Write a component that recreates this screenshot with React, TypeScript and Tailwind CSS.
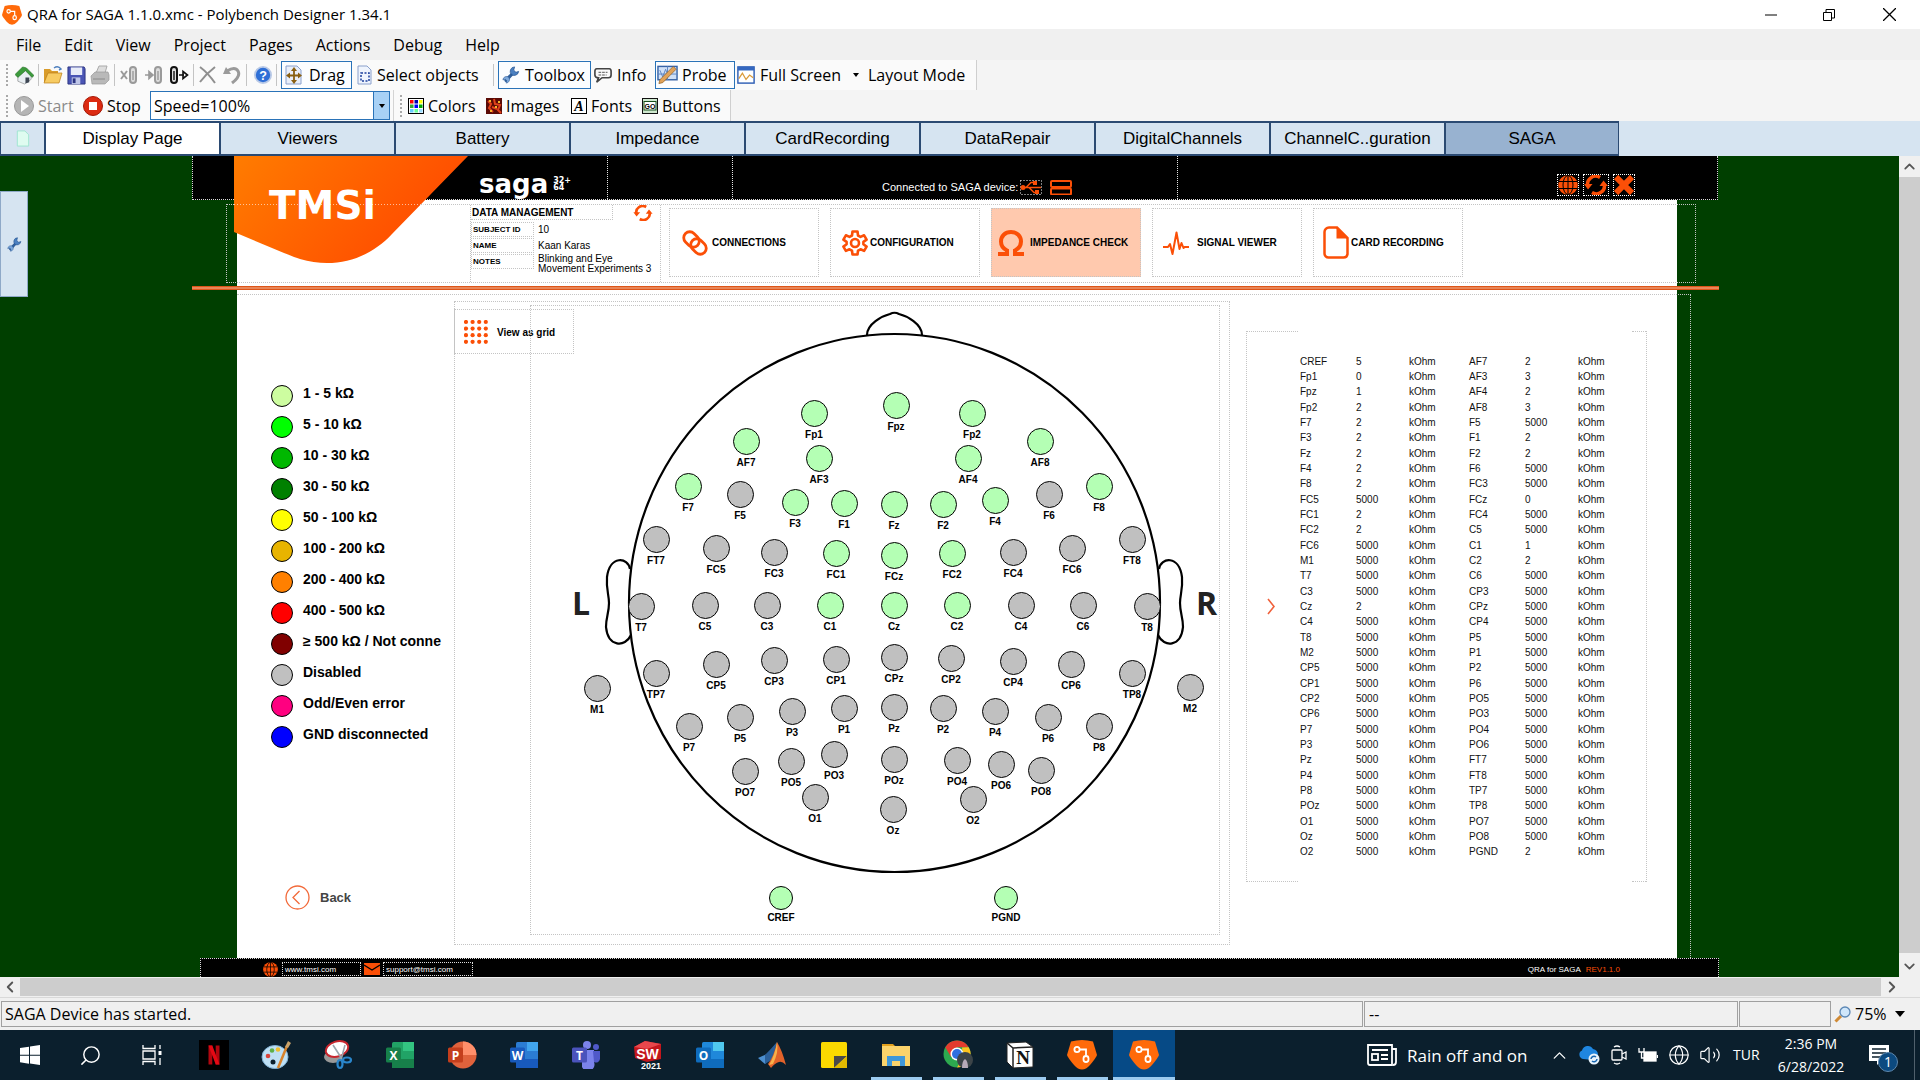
import React from "react";
import { ChevronDown, ChevronLeft, ChevronRight, ChevronUp, Globe, Search, Volume2 } from "lucide-react";

type IconProps = { className?: string };

const ORANGE = "#fb4f07";

/* ---------- shared icons ---------- */

function PolybenchIcon({ className }: IconProps) {
  return (
    <svg viewBox="0 0 30 30" className={className} aria-hidden="true">
      <path d="M4 1.5 Q15 -1.5 26 1.5 L30 15 Q29 18 23 25 Q15 34 7 25 Q1 18 0 15Z" fill="#ff6a0a" />
      <g fill="none" stroke="#fff" strokeWidth="1.8">
        <circle cx="10" cy="9.5" r="2.6" />
        <path d="M13 9.5h6v6" />
        <rect x="16.5" y="16" width="5" height="6" rx="2.5" />
      </g>
    </svg>
  );
}

function WrenchIcon({ className }: IconProps) {
  return (
    <svg viewBox="0 0 20 20" className={className} aria-hidden="true">
      <path d="M4.500 16 12.500 7.500" stroke="#2f5f9c" strokeWidth="3.6" strokeLinecap="round" />
      <path d="M18.500 6a5 5 0 0 1-8 3.500A5 5 0 0 1 14 1l-1 3.600L15.500 7z" fill="#4a7fc0" stroke="#23528f" strokeWidth=".8" />
      <path d="M1 15.500a4 4 0 0 1 6.500-3 4 4 0 0 1-3 6.500l.8-2.800L3.500 14.800z" fill="#7ea9dc" stroke="#23528f" strokeWidth=".6" />
    </svg>
  );
}

function RefreshIcon({ className }: IconProps) {
  return (
    <svg viewBox="0 0 24 20" className={className} aria-hidden="true">
      <g fill="none" stroke={ORANGE} strokeWidth="3.4">
        <path d="M4 11a8 7.5 0 0 1 12-8.500" />
        <path d="M20 9a8 7.5 0 0 1-12 8.500" />
      </g>
      <path d="M0 9h8.500L4 14.500zM15.500 11H24l-4.500-5.500z" fill={ORANGE} />
    </svg>
  );
}

function GlobeGrid({ className }: IconProps) {
  return (
    <svg viewBox="0 0 20 20" className={className} aria-hidden="true">
      <circle cx="10" cy="10" r="9.8" fill={ORANGE} />
      <g fill="none" stroke="#000" strokeWidth="1">
        <path d="M10 0v20M1 6.5h18M1 13.5h18" />
        <ellipse cx="10" cy="10" rx="5" ry="9.5" />
      </g>
    </svg>
  );
}

/* ---------- toolbar icons ---------- */

const HomeIcon = () => (
  <svg viewBox="0 0 20 20" className="size-[19px]" aria-hidden="true">
    <path d="M3 9v7l7 3 7-5V8l-7-6z" fill="#e8eef2" stroke="#777" strokeWidth=".6" />
    <path d="M0 9 8 1l4 1 8 8-2 2-7-7-8 7z" fill="#3c9a3c" stroke="#1f6b22" strokeWidth=".6" />
    <path d="M11 12h4v5l-4 1.5z" fill="#3d4653" />
  </svg>
);
const OpenIcon = () => (
  <svg viewBox="0 0 20 20" className="size-5" aria-hidden="true">
    <path d="M1 4h6l2 2h6v3H5l-3 8H1z" fill="#d99c2b" />
    <path d="M5 8h14l-3 10H1z" fill="#f7cb62" stroke="#b97c17" strokeWidth=".7" />
    <path d="M11 3q4-3 7 1l-2 1" fill="none" stroke="#4d7fbd" strokeWidth="1.4" />
  </svg>
);
const SaveIcon = () => (
  <svg viewBox="0 0 20 20" className="size-[19px]" aria-hidden="true">
    <path d="M1 1h17l1 2v16H1z" fill="#4a55b5" stroke="#2c3582" />
    <path d="M4 1.500h12v8H4z" fill="#e8ecf8" />
    <path d="M5 12h9v7H5z" fill="#bfc6e8" />
    <path d="M6 13h3v5H6z" fill="#2c3582" />
  </svg>
);
const PrintIcon = () => (
  <svg viewBox="0 0 20 20" className="size-5" aria-hidden="true">
    <path d="M6 8 9 1h8l-2 7z" fill="#ddd" stroke="#aaa" />
    <path d="M1 11 5 7h13l1 3v5l-4 4H2z" fill="#b9b9b9" stroke="#999" strokeWidth=".7" />
    <path d="M3 14h12" stroke="#8a8a8a" />
  </svg>
);
function ClipIcon({ kind }: { kind: "remove" | "in" | "out" }) {
  const color = kind === "out" ? "#111" : "#9a9a9a";
  const clipX = kind === "out" ? 2 : 11;
  return (
    <svg viewBox="0 0 20 20" className="size-5" aria-hidden="true">
      <rect x={clipX} y="2" width="6" height="16" rx="3" fill="#ddd" stroke={color} strokeWidth="2" />
      <path d={`M${clipX + 3} 6v9`} stroke={color} strokeWidth="1.4" />
      {kind === "remove" && <path d="M2 6l6 8M8 6l-6 8" stroke={color} strokeWidth="2" />}
      {kind === "in" && <path d="M1 10h6M5 6.500 9 10 5 13.500z" fill={color} stroke={color} strokeWidth="1.600" />}
      {kind === "out" && <path d="M10 10h5M14 6.500 18.500 10 14 13.500z" fill="#fff" stroke={color} strokeWidth="1.600" />}
    </svg>
  );
}
const DeleteIcon = () => (
  <svg viewBox="0 0 20 20" className="size-5" aria-hidden="true">
    <path d="M2 2q8 6 15 16M17 2Q8 9 2 17" fill="none" stroke="#8f8f8f" strokeWidth="2" />
  </svg>
);
const UndoIcon = () => (
  <svg viewBox="0 0 20 20" className="size-5" aria-hidden="true">
    <path d="M5 6q8-5 11 0t-6 12" fill="none" stroke="#9a9a9a" strokeWidth="3" />
    <path d="M1 9 4 2l5 7z" fill="#9a9a9a" />
  </svg>
);
const HelpIcon = () => (
  <svg viewBox="0 0 20 20" className="size-[18px]" aria-hidden="true">
    <circle cx="10" cy="10" r="9" fill="#2f6fd6" stroke="#b9c9e6" strokeWidth="2" />
    <text x="10" y="15" textAnchor="middle" fontSize="14" fontWeight="bold" fill="#fff" fontFamily="Liberation Sans">?</text>
  </svg>
);
const DragIcon = () => (
  <svg viewBox="0 0 18 20" className="h-5 w-[18px]" aria-hidden="true">
    <path d="M1 1h11l4 4v14H1z" fill="#e9effa" stroke="#8aa0cc" />
    <path d="M9 4v13M3 10.500h12" stroke="#8a6012" strokeWidth="1.800" />
    <path d="M9 2l3 4H6zM9 19l3-4H6zM1 10.500l4-3v6zM17 10.500l-4-3v6z" fill="#8a6012" />
  </svg>
);
const SelectIcon = () => (
  <svg viewBox="0 0 16 20" className="h-5 w-4" aria-hidden="true">
    <path d="M1 1h9l4 4v14H1z" fill="#eff4fd" stroke="#8aa0cc" />
    <rect x="4" y="8" width="8" height="8" fill="none" stroke="#1d3f9c" strokeWidth="1.500" strokeDasharray="2 1.500" />
  </svg>
);
const InfoIcon = () => (
  <svg viewBox="0 0 20 20" className="size-[18px]" aria-hidden="true">
    <path d="M3 3h14q2 0 2 3v4q0 3-3 3H9l-6 5 2-5q-4 0-4-3V6q0-3 2-3z" fill="#fafafa" stroke="#444" strokeWidth="1.800" />
    <path d="M5 7h10M5 10h9" stroke="#444" strokeDasharray="3 1" />
  </svg>
);
const ProbeIcon = () => (
  <svg viewBox="0 0 22 20" className="h-5 w-[21px]" aria-hidden="true">
    <rect x="1" y="1" width="20" height="14" fill="#cfe0f7" stroke="#3763a6" strokeWidth="1.500" />
    <path d="M3 5l3 7 3-8 3 8M1 9h20M11 1v14" fill="none" stroke="#5c84c2" />
    <path d="M20 4 6 18l-4 1 1-4L17 1z" fill="#e0a35a" stroke="#8d5a1e" strokeWidth=".7" />
  </svg>
);
const FullScreenIcon = () => (
  <svg viewBox="0 0 20 20" className="size-[18px]" aria-hidden="true">
    <rect x="1" y="1" width="18" height="18" fill="#fff" stroke="#2f5fb5" strokeWidth="1.600" />
    <path d="M1 1h18v4H1z" fill="#3568c0" />
    <path d="M2 14 6 8l4 7 4-5 4 3" fill="none" stroke="#d99a3a" strokeWidth="1.400" />
  </svg>
);
const StartIcon = () => (
  <svg viewBox="0 0 20 20" className="size-5" aria-hidden="true">
    <circle cx="10" cy="10" r="9.500" fill="#b5b5b5" stroke="#999" />
    <path d="M7 4l8 6-8 6z" fill="#fff" />
  </svg>
);
const StopIcon = () => (
  <svg viewBox="0 0 20 20" className="size-5" aria-hidden="true">
    <circle cx="10" cy="10" r="9.500" fill="#dc2b12" stroke="#a51906" />
    <rect x="6" y="6" width="8" height="8" fill="#fff" />
  </svg>
);
const swatches = ["#f00", "#00a", "#ff0", "#3a3", "#00f", "#0a0", "#6cf", "#6f9", "#9df"];
const ColorsIcon = () => (
  <svg viewBox="0 0 16 16" className="size-4" aria-hidden="true">
    <rect x=".5" y=".5" width="15" height="15" fill="#fff" stroke="#000" />
    {swatches.map((c, i) => (
      <rect key={i} x={2 + (i % 3) * 4.5} y={2 + Math.floor(i / 3) * 4.5} width="3.500" height="3.500" fill={c} />
    ))}
  </svg>
);
const ImagesIcon = () => (
  <svg viewBox="0 0 16 16" className="size-4" aria-hidden="true">
    <rect width="16" height="16" fill="#5a0b06" />
    <path d="M2 3l3 3-2 4 4 4M8 1l1 5 5 1-2 5 3 3M6 9l5 2" fill="none" stroke="#e2401a" strokeWidth="2" />
    <path d="M3 2h2v2H3zM12 3h2v2h-2zM9 8h2v2H9zM4 12h2v2H4z" fill="#f4b52a" />
  </svg>
);
const FontsIcon = () => (
  <svg viewBox="0 0 16 16" className="size-4" aria-hidden="true">
    <rect x=".5" y=".5" width="15" height="15" fill="#fff" stroke="#000" />
    <text x="8" y="13" textAnchor="middle" fontSize="14" fontWeight="bold" fontStyle="italic" fontFamily="Liberation Serif">A</text>
  </svg>
);
const ButtonsIcon = () => (
  <svg viewBox="0 0 16 16" className="size-4" aria-hidden="true">
    <rect x=".5" y=".5" width="15" height="15" fill="#cfe8cf" stroke="#111" />
    <rect x="2" y="3.500" width="12" height="8.500" fill="#fff" stroke="#174f1b" />
    <text x="8" y="11" textAnchor="middle" fontSize="7" fontWeight="bold" fontFamily="Liberation Sans">GO</text>
  </svg>
);

/* ---------- window chrome ---------- */

function TitleBar() {
  return (
    <header className="flex h-[29px] items-center bg-white pl-[2px]">
      <PolybenchIcon className="h-5 w-5" />
      <h1 className="ml-[5px] text-[15px]">QRA for SAGA 1.1.0.xmc - Polybench Designer 1.34.1</h1>
      <div className="ml-auto flex h-full">
        <button aria-label="Minimize" className="flex w-[58px] items-center justify-center">
          <svg viewBox="0 0 12 12" className="size-3"><path d="M0 6h12" stroke="#000" /></svg>
        </button>
        <button aria-label="Restore" className="flex w-[58px] items-center justify-center">
          <svg viewBox="0 0 12 12" className="size-3" fill="none" stroke="#000"><path d="M.5 3.500h8v8h-8zM3 3V.5h8.500V9H9" /></svg>
        </button>
        <button aria-label="Close" className="flex w-[62px] items-center justify-center">
          <svg viewBox="0 0 12 12" className="size-[13px]"><path d="M0 0l12 12M12 0 0 12" stroke="#000" strokeWidth="1.200" /></svg>
        </button>
      </div>
    </header>
  );
}

const menus = ["File", "Edit", "View", "Project", "Pages", "Actions", "Debug", "Help"];

function MenuBar() {
  return (
    <nav className="flex h-[31px] items-center gap-[23px] bg-[#f0f0f0] pl-4 text-base">
      {menus.map((m) => (
        <button key={m}>{m}</button>
      ))}
    </nav>
  );
}

const Separator = () => <span className="mx-1 h-[22px] w-px bg-[#c4c4c4]" />;
const Grip = () => <span className="mx-[6px] h-[22px] border-l-2 border-dotted border-[#a9a9a9]" />;

function ToolButton({ icon, label, active, disabled, className = "" }: { icon?: React.ReactNode; label: string; active?: boolean; disabled?: boolean; className?: string }) {
  return (
    <button
      disabled={disabled}
      className={`flex h-7 items-center whitespace-nowrap ${active ? "border border-[#2a73b8] bg-[#fbfdff]" : ""} ${disabled ? "text-[#8a8a8a]" : ""} ${className}`}
    >
      {icon}
      {label}
    </button>
  );
}

function Toolbars() {
  return (
    <div className="bg-[#f4f4f4] text-base">
      <div className="flex h-[30px] w-[977px] items-center border-r border-[#cfcfcf] bg-[#fafafa]">
        <Grip />
        <button aria-label="Home" className="ml-px"><HomeIcon /></button>
        <Separator />
        <div className="flex items-center gap-1">
          <button aria-label="Open"><OpenIcon /></button>
          <button aria-label="Save"><SaveIcon /></button>
          <button aria-label="Print"><PrintIcon /></button>
        </div>
        <Separator />
        <div className="flex items-center gap-[5px]">
          <button aria-label="Disconnect"><ClipIcon kind="remove" /></button>
          <button aria-label="Import"><ClipIcon kind="in" /></button>
          <button aria-label="Export"><ClipIcon kind="out" /></button>
        </div>
        <Separator />
        <div className="flex items-center gap-1">
          <button aria-label="Delete"><DeleteIcon /></button>
          <button aria-label="Undo"><UndoIcon /></button>
        </div>
        <Separator />
        <button aria-label="Help" className="ml-[3px]"><HelpIcon /></button>
        <Separator />
        <ToolButton active icon={<DragIcon />} label="Drag" className="w-[71px] gap-[6px] pl-[3px]" />
        <ToolButton icon={<SelectIcon />} label="Select objects" className="ml-[5px] w-[132px] gap-1" />
        <Separator />
        <ToolButton active icon={<WrenchIcon className="size-[18px]" />} label="Toolbox" className="w-[93px] gap-[5px] pl-[3px]" />
        <ToolButton icon={<InfoIcon />} label="Info" className="ml-[3px] w-[61px] gap-[5px]" />
        <ToolButton active icon={<ProbeIcon />} label="Probe" className="w-[80px] gap-1 pl-px" />
        <ToolButton icon={<FullScreenIcon />} label="Full Screen" className="ml-[2px] w-[116px] gap-[5px]" />
        <svg viewBox="0 0 6 4" className="h-1 w-[6px]"><path d="M0 0h6L3 4z" /></svg>
        <ToolButton label="Layout Mode" className="ml-[9px]" />
      </div>
      <div className="flex h-[31px] items-center">
        <div className="flex h-full w-[731px] items-center border-r border-[#cfcfcf] bg-[#fafafa]">
          <Grip />
          <ToolButton disabled icon={<StartIcon />} label="Start" className="w-[69px] gap-1" />
          <ToolButton icon={<StopIcon />} label="Stop" className="w-[67px] gap-1" />
          <div className="relative">
            <select aria-label="Speed" className="h-[29px] w-[240px] appearance-none border border-[#2a73b8] bg-white pl-[3px]">
              <option>Speed=100%</option>
            </select>
            <span className="pointer-events-none absolute inset-y-px right-px flex w-4 items-center justify-center border-l border-[#2a73b8] bg-[#a8d1f5]">
              <svg viewBox="0 0 6 4" className="h-1 w-[6px]"><path d="M0 0h6L3 4z" /></svg>
            </span>
          </div>
          <span className="ml-[3px] h-full w-px bg-[#d4d4d4]" />
          <Grip />
          <ToolButton icon={<ColorsIcon />} label="Colors" className="w-[78px] gap-1" />
          <ToolButton icon={<ImagesIcon />} label="Images" className="w-[85px] gap-1" />
          <ToolButton icon={<FontsIcon />} label="Fonts" className="w-[71px] gap-1" />
          <ToolButton icon={<ButtonsIcon />} label="Buttons" className="gap-1" />
        </div>
      </div>
    </div>
  );
}

const tabs = ["Display Page", "Viewers", "Battery", "Impedance", "CardRecording", "DataRepair", "DigitalChannels", "ChannelC..guration", "SAGA"];

function PageTabs() {
  return (
    <div role="tablist" className="flex h-[35px] bg-[#d6e4f1] font-['Liberation_Sans',sans-serif] text-[17px]">
      <button aria-label="New page" className="flex w-11 items-center justify-center border-y-2 border-l border-[#2b4a72]">
        <svg viewBox="0 0 14 18" className="h-[17px] w-[14px]"><path d="M1 1h8l4 4v12H1z" fill="#dffcf0" stroke="#9fe6d0" /></svg>
      </button>
      {tabs.map((t) => (
        <button
          key={t}
          role="tab"
          aria-selected={t === "Display Page"}
          className={`w-[175px] border-y-2 border-l-2 border-[#2b4a72] last:border-r ${t === "Display Page" ? "bg-white" : t === "SAGA" ? "bg-[#98b2d0]" : "bg-[#d6e4f1]"}`}
        >
          {t}
        </button>
      ))}
    </div>
  );
}

/* ---------- SAGA page ---------- */

function HeaderStrip() {
  return (
    <div className="relative z-10 mr-[181px] ml-[192px] flex h-11 border-x border-b border-dotted border-[#d8d8d8] bg-black text-white">
      <div className="w-[415px] border-r border-dotted border-[#e5e5e5]">
        <svg viewBox="0 0 236 112" className="absolute top-0 left-[41px] h-28 w-[236px]" aria-label="TMSi">
          <defs>
            <linearGradient id="flame" x1="0" x2="1" y1="0" y2=".4">
              <stop offset="0" stopColor="#ff7c00" />
              <stop offset="1" stopColor="#ff4a00" />
            </linearGradient>
          </defs>
          <path d="M0 0H234L158 78C136 102 102 114 66 103Q60 101 50 97L0 76Z" fill="url(#flame)" />
          <path d="M0 48.500H195" stroke="#fff" strokeOpacity=".6" strokeDasharray="1 2" />
          <text x="35" y="63" fontSize="39" fontWeight="bold" fill="#fff" fontFamily="DejaVu Sans">TMSi</text>
        </svg>
        <div className="ml-[286px] flex h-full items-center gap-[5px] pt-3 font-['DejaVu_Sans',sans-serif]">
          <span className="text-[26px] leading-6 font-bold">saga</span>
          <span className="flex text-[8px] leading-[7px] font-bold">
            <span>32<br />64</span>
            <span>+</span>
          </span>
        </div>
      </div>
      <div className="w-[125px] border-r border-dotted border-[#e5e5e5]" />
      <div className="flex w-[445px] items-center border-r border-dotted border-[#e5e5e5] pt-5 pl-[149px] font-['Liberation_Sans',sans-serif] text-[11px]">
        <span className="mr-[2px] whitespace-nowrap">Connected to SAGA device:</span>
        <svg viewBox="0 0 22 15" className="h-[15px] w-[22px]" aria-hidden="true">
          <rect x=".5" y=".5" width="21" height="14" fill="none" stroke="#fff" strokeDasharray="1 2" />
          <g fill="none" stroke={ORANGE} strokeWidth="1.500"><path d="M3 7.500h18M6 7.500l5-5h3M9 7.500l5 5h3" /></g>
          <circle cx="3" cy="7.500" r="2.500" fill={ORANGE} /><path d="M13 1h4v4h-4zM15 10h4v4h-4z" fill={ORANGE} />
        </svg>
        <svg viewBox="0 0 22 15" className="ml-2 h-[15px] w-[22px]" aria-hidden="true">
          <g fill="none" stroke={ORANGE} strokeWidth="2"><rect x="1" y="1" width="20" height="6" rx="1" /><rect x="1" y="8.500" width="20" height="6" rx="1" /></g>
        </svg>
      </div>
      <div className="mt-[18px] mr-[82px] ml-auto flex gap-1">
        <button aria-label="Network" className="size-[22px] border border-dotted border-white"><GlobeGrid className="size-5" /></button>
        <button aria-label="Reload" className="h-[22px] w-[26px] border border-dotted border-white"><RefreshIcon className="h-5 w-6" /></button>
        <button aria-label="Close SAGA" className="size-[22px] border border-dotted border-white">
          <svg viewBox="0 0 20 20" className="size-5"><path d="M2 2l16 16M18 2 2 18" stroke={ORANGE} strokeWidth="6" /></svg>
        </button>
      </div>
    </div>
  );
}

const LinkIcon = () => (
  <svg viewBox="0 0 26 26" className="size-[26px]" fill="none" stroke={ORANGE} strokeWidth="2.800" aria-hidden="true">
    <rect x="1" y="3.500" width="17" height="12" rx="6" transform="rotate(45 9.500 9.500)" />
    <rect x="8" y="10.500" width="17" height="12" rx="6" transform="rotate(45 16.500 16.500)" />
  </svg>
);
const GearIcon = () => (
  <svg viewBox="0 0 26 26" className="size-[26px]" fill="none" stroke={ORANGE} strokeWidth="2.600" strokeLinejoin="round" aria-hidden="true">
    <path d="M10.500 1.500h5l.5 4 2.500 1.400 3.600-1.600 2.500 4.300-3.200 2.300v2.400l3.200 2.300-2.500 4.300-3.600-1.600L16 20.700l-.5 3.800h-5l-.5-3.800-2.500-1.400-3.600 1.600-2.500-4.300 3.200-2.300v-2.400L1.400 9.600l2.500-4.300 3.600 1.600L10 5.500z" />
    <circle cx="13" cy="13" r="4" />
  </svg>
);
const OmegaIcon = () => (
  <svg viewBox="0 0 26 26" className="size-[26px]" fill="none" stroke={ORANGE} strokeWidth="4" aria-hidden="true">
    <path d="M0 24h9v-3.500C4 18 3 14.500 3 11.500 3 6 7 2 13 2s10 4 10 9.500c0 3-1 6.500-6 9V24h9" />
  </svg>
);
const PulseIcon = () => (
  <svg viewBox="0 0 26 24" className="h-6 w-[26px]" fill="none" stroke={ORANGE} strokeWidth="2" strokeLinejoin="round" aria-hidden="true">
    <path d="M0 16h5l2-3 2.500 10L13.500 1.500 16.500 18l2-6 2 5 1-1H26" />
  </svg>
);
const CardIcon = () => (
  <svg viewBox="0 0 26 33" className="h-[33px] w-[26px]" aria-hidden="true">
    <path d="M6 1.500h8L24.500 12v16a4 4 0 0 1-4 3.500H5.500a4 4 0 0 1-4-4V6A4.500 4.500 0 0 1 6 1.500z" fill="#fff" stroke={ORANGE} strokeWidth="2.500" />
    <path d="M13.500 1.500 25 12.500H13.500z" fill={ORANGE} />
  </svg>
);

const navItems = [
  { label: "CONNECTIONS", icon: <LinkIcon />, cls: "gap-1 pl-3" },
  { label: "CONFIGURATION", icon: <GearIcon />, cls: "gap-[2px] pl-[11px]" },
  { label: "IMPEDANCE CHECK", icon: <OmegaIcon />, cls: "gap-[6px] pl-[6px]" },
  { label: "SIGNAL VIEWER", icon: <PulseIcon />, cls: "gap-2 pl-[10px]" },
  { label: "CARD RECORDING", icon: <CardIcon />, cls: "gap-[2px] pl-[9px]" },
];

function NavRow() {
  return (
    <div className="mt-1 -mr-[19px] -ml-[11px] flex h-[79px] border border-dotted border-[#c4c4c4]">
      <div className="ml-[243px] w-[191px] border-x border-dotted border-[#c4c4c4] font-['Liberation_Sans',sans-serif]">
        <div className="flex justify-between">
          <h2 className="h-[15px] w-[142px] border-r border-b border-dotted border-[#c4c4c4] pl-px text-[10px] leading-[16px] font-bold">DATA MANAGEMENT</h2>
          <button aria-label="Refresh data" className="mr-[7px] h-4 w-5"><RefreshIcon className="h-4 w-5" /></button>
        </div>
        <dl className="mt-px grid grid-cols-[63px_1fr] text-[10px]">
          <dt className="h-[15px] border border-dotted border-[#c4c4c4] pl-px text-[8px] leading-[14px] font-bold">SUBJECT ID</dt>
          <dd className="pl-1 leading-[16px]">10</dd>
          <dt className="h-[15px] border border-dotted border-[#c4c4c4] pl-px text-[8px] leading-[14px] font-bold">NAME</dt>
          <dd className="pl-1 leading-[16px]">Kaan Karas</dd>
          <dt className="h-[15px] border border-dotted border-[#c4c4c4] pl-px text-[8px] leading-[14px] font-bold">NOTES</dt>
          <dd className="pl-1 leading-[10px] whitespace-nowrap">Blinking and Eye<br />Movement Experiments 3</dd>
        </dl>
      </div>
      <nav className="mt-[3px] ml-2 flex h-[69px] gap-[11px]">
        {navItems.map((n) => (
          <button
            key={n.label}
            className={`flex w-[150px] items-center border border-dotted border-[#c4c4c4] font-['Liberation_Sans',sans-serif] text-[10px] font-bold whitespace-nowrap ${n.cls} ${n.label === "IMPEDANCE CHECK" ? "bg-[#ffc9ae]" : ""}`}
          >
            {n.icon}
            {n.label}
          </button>
        ))}
      </nav>
    </div>
  );
}

const legend = [
  ["#cdfda0", "1 - 5 kΩ"],
  ["#00ff00", "5 - 10 kΩ"],
  ["#00b800", "10 - 30 kΩ"],
  ["#008000", "30 - 50 kΩ"],
  ["#ffff00", "50 - 100 kΩ"],
  ["#e8b400", "100 - 200 kΩ"],
  ["#ff8000", "200 - 400 kΩ"],
  ["#ff0000", "400 - 500 kΩ"],
  ["#800000", "≥ 500 kΩ / Not conne"],
  ["#c0c0c0", "Disabled"],
  ["#ff0080", "Odd/Even error"],
  ["#0000ff", "GND disconnected"],
];

function Legend() {
  return (
    <aside className="flex w-[217px] flex-col pt-[85px] pl-[34px] font-['Liberation_Sans',sans-serif] font-bold">
      <ul>
        {legend.map(([color, label]) => (
          <li key={label} className="flex h-[31px] items-center">
            <span className="size-[22px] shrink-0 rounded-full border border-black" style={{ backgroundColor: color }} />
            <span className="ml-[10px] pb-[5px] text-sm whitespace-nowrap">{label}</span>
          </li>
        ))}
      </ul>
      <button className="mt-[133px] ml-[14px] flex items-center gap-[10px] text-[13px] text-[#444]">
        <svg viewBox="0 0 25 25" className="size-[25px]" fill="none" stroke="#f26a3a" strokeWidth="1.300" aria-hidden="true">
          <circle cx="12.500" cy="12.500" r="11.500" />
          <path d="M14.500 6 8 12.500l6.500 6.500" />
        </svg>
        Back
      </button>
    </aside>
  );
}

type Electrode = [name: string, x: number, y: number, ok?: 1];

const electrodes: Electrode[] = [
  ["Fp1", 285, 109, 1], ["Fpz", 367, 101, 1], ["Fp2", 443, 109, 1],
  ["AF7", 217, 137, 1], ["AF3", 290, 154, 1], ["AF4", 439, 154, 1], ["AF8", 511, 137, 1],
  ["F7", 159, 182, 1], ["F5", 211, 190], ["F3", 266, 198, 1], ["F1", 315, 199, 1], ["Fz", 365, 200, 1],
  ["F2", 414, 200, 1], ["F4", 466, 196, 1], ["F6", 520, 190], ["F8", 570, 182, 1],
  ["FT7", 127, 235], ["FC5", 187, 244], ["FC3", 245, 248], ["FC1", 307, 249, 1], ["FCz", 365, 251, 1],
  ["FC2", 423, 249, 1], ["FC4", 484, 248], ["FC6", 543, 244], ["FT8", 603, 235],
  ["T7", 112, 302], ["C5", 176, 301], ["C3", 238, 301], ["C1", 301, 301, 1], ["Cz", 365, 301, 1],
  ["C2", 428, 301, 1], ["C4", 492, 301], ["C6", 554, 301], ["T8", 618, 302],
  ["M1", 68, 384], ["TP7", 127, 369], ["CP5", 187, 360], ["CP3", 245, 356], ["CP1", 307, 355], ["CPz", 365, 353],
  ["CP2", 422, 354], ["CP4", 484, 357], ["CP6", 542, 360], ["TP8", 603, 369], ["M2", 661, 383],
  ["P7", 160, 422], ["P5", 211, 413], ["P3", 263, 407], ["P1", 315, 404], ["Pz", 365, 403],
  ["P2", 414, 404], ["P4", 466, 407], ["P6", 519, 413], ["P8", 570, 422],
  ["PO7", 216, 467], ["PO5", 262, 457], ["PO3", 305, 450], ["POz", 365, 455], ["PO4", 428, 456],
  ["PO6", 472, 460], ["PO8", 512, 466],
  ["O1", 286, 493], ["Oz", 364, 505], ["O2", 444, 495],
  ["CREF", 252, 595, 1], ["PGND", 477, 595, 1],
];

function HeadMap() {
  return (
    <section className="relative mt-[6px] mb-[13px] w-[776px] border border-dotted border-[#c4c4c4]">
      <button className="absolute top-[7px] -left-px flex h-[45px] w-[120px] items-center gap-[9px] border border-dotted border-[#c4c4c4] pt-px pl-[9px] font-['Liberation_Sans',sans-serif] text-[10px] font-bold">
        <svg viewBox="0 0 24 24" className="size-6" fill={ORANGE} aria-hidden="true">
          {[2, 8.6, 15.2, 21.800].map((y) => [2, 8.6, 15.2, 21.800].map((x) => <circle key={`${x}-${y}`} cx={x} cy={y} r="2.100" />))}
        </svg>
        View as grid
      </button>
      <div className="relative mt-[3px] ml-[75px] h-[630px] w-[690px] border border-dotted border-[#c4c4c4] font-['Liberation_Sans',sans-serif]">
        <svg viewBox="0 0 690 630" className="absolute -top-px -left-px h-[630px] w-[690px]" fill="none" stroke="#000" strokeWidth="2.200" aria-hidden="true">
          <ellipse cx="364.500" cy="298" rx="265.500" ry="269" />
          <path d="M337 30C337 19 352 11 360 9Q364.500 6.500 369 9C377 11 392 19 392 30" />
          <path d="M100 264C98 252 80 250 77 272C76 284 79 290 79 298C79 308 76 312 76 322C78 342 95 343 101 330" />
          <path d="M629 264C631 252 649 250 652 272C653 284 650 290 650 298C650 308 653 312 653 322C651 342 634 343 628 330" />
        </svg>
        <span className="absolute top-[277px] left-[41px] font-['Open_Sans',sans-serif] text-[32px] leading-10 font-bold text-[#222]">L</span>
        <span className="absolute top-[277px] left-[665px] font-['Open_Sans',sans-serif] text-[32px] leading-10 font-bold text-[#222]">R</span>
        {electrodes.map(([name, x, y, ok]) => (
          <div key={name} className="absolute flex w-12 flex-col items-center" style={{ left: x - 26, top: y - 15 }}>
            <span
              className={`rounded-full border border-black ${y > 590 ? "size-6" : "size-[27px]"} ${ok ? "bg-[#b4ffb4]" : "bg-[#c0c0c0]"}`}
            />
            <span className="text-[10px] leading-4 font-bold">{name}</span>
          </div>
        ))}
      </div>
    </section>
  );
}

const readings: [string, number, string, number][] = [
  ["CREF", 5, "AF7", 2], ["Fp1", 0, "AF3", 3], ["Fpz", 1, "AF4", 2], ["Fp2", 2, "AF8", 3],
  ["F7", 2, "F5", 5000], ["F3", 2, "F1", 2], ["Fz", 2, "F2", 2], ["F4", 2, "F6", 5000],
  ["F8", 2, "FC3", 5000], ["FC5", 5000, "FCz", 0], ["FC1", 2, "FC4", 5000], ["FC2", 2, "C5", 5000],
  ["FC6", 5000, "C1", 1], ["M1", 5000, "C2", 2], ["T7", 5000, "C6", 5000], ["C3", 5000, "CP3", 5000],
  ["Cz", 2, "CPz", 5000], ["C4", 5000, "CP4", 5000], ["T8", 5000, "P5", 5000], ["M2", 5000, "P1", 5000],
  ["CP5", 5000, "P2", 5000], ["CP1", 5000, "P6", 5000], ["CP2", 5000, "PO5", 5000], ["CP6", 5000, "PO3", 5000],
  ["P7", 5000, "PO4", 5000], ["P3", 5000, "PO6", 5000], ["Pz", 5000, "FT7", 5000], ["P4", 5000, "FT8", 5000],
  ["P8", 5000, "TP7", 5000], ["POz", 5000, "TP8", 5000], ["O1", 5000, "PO7", 5000], ["Oz", 5000, "PO8", 5000],
  ["O2", 5000, "PGND", 2],
];

function ReadingsPanel() {
  return (
    <section className="mt-9 ml-4 flex h-[551px] w-[401px] border-x border-dotted border-[#c4c4c4] font-['Liberation_Sans',sans-serif]">
      <div className="flex h-full w-[51px] items-center justify-center border-y border-dotted border-[#c4c4c4]">
        <button aria-label="Collapse table" className="-ml-1 bg-white py-4">
          <svg viewBox="0 0 8 17" className="h-[17px] w-2" fill="none" stroke="#f0603a" strokeWidth="1.600"><path d="M1 1l6 7.500L1 16" /></svg>
        </button>
      </div>
      <table className="mt-[23px] ml-[2px] h-[506px] table-fixed text-left text-[10px] leading-[12px] text-[#111]">
        <tbody>
          {readings.map(([a, av, b, bv]) => (
            <tr key={a}>
              <th scope="row" className="w-14 p-0 font-normal">{a}</th>
              <td className="w-[53px] p-0">{av}</td>
              <td className="w-[60px] p-0">kOhm</td>
              <th scope="row" className="w-14 p-0 font-normal">{b}</th>
              <td className="w-[53px] p-0">{bv}</td>
              <td className="w-[53px] p-0">kOhm</td>
            </tr>
          ))}
        </tbody>
      </table>
      <div className="ml-auto w-[14px] border-y border-dotted border-[#c4c4c4]" />
    </section>
  );
}

function FooterStrip() {
  return (
    <footer className="mr-[180px] ml-[200px] flex h-[19px] items-center border-x border-t border-dotted border-[#d8d8d8] bg-black pt-[2px] pl-[62px] font-['Liberation_Sans',sans-serif] text-[8px] text-white">
      <GlobeGrid className="size-[15px]" />
      <a href="#site" className="ml-1 h-[14px] w-[79px] border border-dotted border-[#ddd] pl-[2px] leading-[14px]">www.tmsi.com</a>
      <svg viewBox="0 0 16 12" className="ml-[3px] h-3 w-4" aria-hidden="true">
        <rect width="16" height="12" fill={ORANGE} />
        <path d="M0 2l8 5 8-5" fill="none" stroke="#000" strokeWidth="1.300" />
      </svg>
      <a href="#mail" className="ml-[3px] h-[14px] w-[90px] border border-dotted border-[#ddd] pl-[2px] leading-[14px]">support@tmsi.com</a>
      <span className="ml-auto pt-[2px]">QRA for SAGA</span>
      <span className="mr-[98px] ml-[5px] pt-[2px] text-[#fb4f07]">REV1.1.0</span>
    </footer>
  );
}

function Canvas() {
  return (
    <div className="flex flex-1">
      <main className="relative flex flex-1 flex-col bg-[#003f00]">
        <HeaderStrip />
        <div className="mr-[222px] ml-[237px] flex flex-1 flex-col bg-white">
          <NavRow />
          <div className="mt-[3px] -mr-[42px] -ml-[45px] h-1 border-y border-[#dd5518] bg-[#e88658]" />
          <div className="mt-1 -mr-[14px] flex flex-1 border-t border-r border-dotted border-[#c4c4c4]">
            <Legend />
            <HeadMap />
            <ReadingsPanel />
          </div>
        </div>
        <FooterStrip />
        <button aria-label="Open toolbox" className="absolute top-[35px] left-0 flex h-[106px] w-7 items-center justify-center border border-[#8fa9c8] bg-[#d6e4f1]">
          <WrenchIcon className="size-[15px]" />
        </button>
      </main>
      <div className="flex w-[21px] flex-col items-center bg-[#f0f0f0] text-[#555]">
        <ChevronUp className="my-[2px] size-[17px]" strokeWidth={2.500} />
        <div className="w-full flex-1 bg-[#cdcdcd]" />
        <ChevronDown className="mt-[5px] mb-[2px] size-[17px]" strokeWidth={2.500} />
      </div>
    </div>
  );
}

function StatusArea() {
  return (
    <div className="bg-[#f0f0f0]">
      <div className="flex h-5 items-center text-[#555]">
        <ChevronLeft className="mx-px size-[18px]" strokeWidth={2.500} />
        <div className="h-[18px] flex-1 bg-[#cdcdcd]" />
        <ChevronRight className="mr-[19px] ml-[2px] size-[18px]" strokeWidth={2.500} />
      </div>
      <div className="flex h-[33px] items-center gap-px border-t border-[#d9d9d9] pl-px text-base">
        <div className="flex h-[26px] flex-1 items-center border border-[#a0a0a0] pl-[3px]">SAGA Device has started.</div>
        <div className="flex h-[26px] w-[374px] items-center border border-[#a0a0a0] pl-1">--</div>
        <div className="h-[26px] w-[92px] border border-[#a0a0a0]" />
        <button className="flex w-[88px] items-center gap-1 pl-[2px]">
          <svg viewBox="0 0 17 17" className="size-[17px]" aria-hidden="true">
            <path d="M1.500 15.500 7 10" stroke="#d08a35" strokeWidth="3" />
            <circle cx="11" cy="6" r="5" fill="#cfe6fa" stroke="#5c87b5" strokeWidth="1.300" />
          </svg>
          75%
          <svg viewBox="0 0 10 6" className="ml-1 h-[6px] w-[10px]"><path d="M0 0h10L5 6z" /></svg>
        </button>
      </div>
    </div>
  );
}

/* ---------- taskbar ---------- */

function OfficeIcon({ letter, dark, mid, light, round }: { letter: string; dark: string; mid: string; light: string; round?: boolean }) {
  return (
    <svg viewBox="0 0 30 28" className="h-7 w-[30px]" aria-hidden="true">
      {round ? (
        <>
          <circle cx="16" cy="14" r="13.500" fill={mid} />
          <path d="M16 .5A13.500 13.500 0 0 1 29.500 14H16z" fill={light} />
        </>
      ) : (
        <>
          <rect x="7" y="1" width="22" height="26" rx="1.500" fill={mid} />
          <path d="M18 1h11v9H18z" fill={light} />
          <path d="M7 18h22v9H7z" fill={dark} />
        </>
      )}
      <rect x="1" y="6.500" width="15" height="15" rx="1.500" fill={dark} />
      <text x="8.500" y="18.500" textAnchor="middle" fontSize="12" fontWeight="bold" fill="#fff" fontFamily="Open Sans">{letter}</text>
    </svg>
  );
}

const apps: { name: string; icon: React.ReactNode; open?: boolean; active?: boolean }[] = [
  { name: "Netflix", icon: (
    <svg viewBox="0 0 30 30" className="size-[30px]"><rect width="30" height="30" fill="#000" /><path d="M9.500 5.500h3.800v19H9.500zM16.700 5.500h3.800v19h-3.800z" fill="#b1060f" /><path d="M9.500 5.500h3.800l7.200 19h-3.800z" fill="#e50914" /></svg>
  ) },
  { name: "Paint", icon: (
    <svg viewBox="0 0 30 30" className="size-[30px]"><ellipse cx="14" cy="17" rx="13" ry="11.500" fill="#bfe0f5" stroke="#7fb0d3" /><circle cx="7" cy="16" r="2.300" fill="#d9433a" /><circle cx="11" cy="10.500" r="2.300" fill="#5eb04a" /><circle cx="17" cy="9.500" r="2.300" fill="#f0bd30" /><circle cx="12" cy="22" r="2.500" fill="#0c1f2c" /><path d="M17 28 26 6" stroke="#d8822b" strokeWidth="2.500" /><path d="M24 7l3-6 3 2-3 5z" fill="#c9a26a" /></svg>
  ) },
  { name: "Snipping Tool", icon: (
    <svg viewBox="0 0 30 30" className="size-[30px]"><ellipse cx="10" cy="17" rx="9" ry="6" fill="#999" /><ellipse cx="14" cy="9" rx="11.500" ry="7.500" transform="rotate(-18 14 9)" fill="#fff" stroke="#c8262e" strokeWidth="2" /><path d="M10 5l9 14M22 5l-4 15" stroke="#9aa5ad" strokeWidth="1.600" /><g fill="none" stroke="#2a86cc" strokeWidth="2.200"><ellipse cx="17" cy="24" rx="2.500" ry="4" /><ellipse cx="24" cy="20" rx="4" ry="2.500" /></g></svg>
  ) },
  { name: "Excel", icon: <OfficeIcon letter="X" dark="#17804a" mid="#21a366" light="#33c481" /> },
  { name: "PowerPoint", icon: <OfficeIcon letter="P" dark="#c43e1c" mid="#e0623c" light="#ff8f6b" round /> },
  { name: "Word", icon: <OfficeIcon letter="W" dark="#185abd" mid="#2b7cd3" light="#41a5ee" /> },
  { name: "Teams", icon: (
    <svg viewBox="0 0 30 28" className="h-7 w-[30px]"><circle cx="16" cy="4" r="4" fill="#7b83eb" /><circle cx="25" cy="6" r="3" fill="#5059c9" /><path d="M11 9h12v12a6 6 0 0 1-12 5z" fill="#7b83eb" /><path d="M22 10h7v8a4 4 0 0 1-6 3z" fill="#5059c9" /><rect x="1" y="6.500" width="15" height="15" rx="1.500" fill="#4b53bc" /><text x="8.500" y="18.500" textAnchor="middle" fontSize="12" fontWeight="bold" fill="#fff" fontFamily="Open Sans">T</text></svg>
  ) },
  { name: "SolidWorks 2021", icon: (
    <svg viewBox="0 0 30 30" className="size-[30px]"><path d="M1 7 12 1l16 3v15l-14 3L2 18z" fill="#c4161c" /><path d="M1 7 12 1l16 3-14 5z" fill="#e8474c" /><text x="14.500" y="19" textAnchor="middle" fontSize="14" fontWeight="bold" fill="#fff" fontFamily="Liberation Sans">SW</text><text x="18" y="29" textAnchor="middle" fontSize="9" fontWeight="bold" fill="#fff" fontFamily="Liberation Sans">2021</text></svg>
  ) },
  { name: "Outlook", icon: <OfficeIcon letter="O" dark="#0f6cbd" mid="#1f88da" light="#50c8ee" /> },
  { name: "MATLAB", icon: (
    <svg viewBox="0 0 30 28" className="h-7 w-[30px]"><path d="M1 17l9-4 4 4-6 6z" fill="#4c8fd0" /><path d="M8 14Q14 8 20 1l-4 17-8 5z" fill="#2b5f99" /><path d="M20 1q5 8 9 23-4-4-7-3-4 1-8 6l-3-4q6-8 9-22z" fill="#e2622a" /><path d="M20 1q2 10-4 22l-4 1q6-10 8-23z" fill="#f8b24a" /></svg>
  ) },
  { name: "Sticky Notes", icon: (
    <svg viewBox="0 0 28 28" className="size-7"><rect x="1" y="1" width="26" height="26" rx="1.500" fill="#fbd900" /><path d="M14 27V15h13z" fill="#4a4a4a" /><path d="M14 27 27 15v12z" fill="#e2b900" /></svg>
  ) },
  { name: "File Explorer", open: true, icon: (
    <svg viewBox="0 0 30 28" className="h-7 w-[30px]"><path d="M1 3h11l3 3H1z" fill="#e2a01d" /><path d="M1 5h28v20H1z" fill="#fbd36b" /><path d="M6 25V15h18v10h-5v-5h-8v5z" fill="#3f97d9" /></svg>
  ) },
  { name: "Chrome", open: true, icon: (
    <svg viewBox="0 0 30 30" className="size-[30px]"><circle cx="14" cy="14" r="13.500" fill="#2da94f" /><path d="M2.300 7.200A13.500 13.500 0 0 1 25.700 7.200H14L8 17z" fill="#e33b2e" /><path d="M25.700 7.200A13.500 13.500 0 0 1 14 27.500l6-10-1-10z" fill="#fcc31e" /><circle cx="14" cy="14" r="6.500" fill="#fff" /><circle cx="14" cy="14" r="5" fill="#2f6fe0" /><circle cx="22" cy="20" r="8" fill="#3c4448" /><path d="M19 28q0-7 3-9 3 2 3 9z" fill="#b7a9b8" /></svg>
  ) },
  { name: "Notion", open: true, icon: (
    <svg viewBox="0 0 28 28" className="size-7"><path d="M1 2l19-1 7 5v20l-20 1-6-6z" fill="#fff" stroke="#222" /><path d="M1 2l6 5 20-1M7 7v20" fill="none" stroke="#222" strokeWidth="1.500" /><text x="17" y="23" textAnchor="middle" fontSize="19" fontWeight="bold" fill="#111" fontFamily="Liberation Serif">N</text></svg>
  ) },
  { name: "Polybench", open: true, icon: <PolybenchIcon className="size-[30px]" /> },
  { name: "Polybench Designer", open: true, active: true, icon: <PolybenchIcon className="size-[30px]" /> },
];

function Taskbar() {
  return (
    <footer className="flex h-[50px] items-stretch bg-[#0b1f2d] text-white">
      <button aria-label="Start menu" className="flex w-[60px] items-center justify-center">
        <svg viewBox="0 0 20 20" className="size-5" fill="#fff"><path d="M0 3l9-1.300v8H0zM10 1.500 20 0v9.700H10zM0 10.700h9v8L0 17.300zM10 10.700h10V20l-10-1.400z" /></svg>
      </button>
      <button aria-label="Search" className="flex w-[60px] items-center justify-center"><Search className="size-[23px] -scale-x-100" strokeWidth={1.500} /></button>
      <button aria-label="Task view" className="flex w-[63px] items-center justify-center">
        <svg viewBox="0 0 20 20" className="size-5" fill="none" stroke="#fff" strokeWidth="1.300"><path d="M1 0v3.500h12V0M1 20v-3.500h12V20M1 6h12v8H1zM18 0v4M18 13v7" /><path d="M18 6v4" strokeWidth="3" /></svg>
      </button>
      {apps.map((a) => (
        <button key={a.name} aria-label={a.name} className={`flex w-[62px] flex-col items-center ${a.active ? "bg-[#064a86]" : ""}`}>
          <span className="flex flex-1 items-center pt-[2px]">{a.icon}</span>
          <span className={`h-[3px] ${a.open ? "bg-[#9ccbf0]" : ""} ${a.active ? "w-full" : "w-[51px]"}`} />
        </button>
      ))}
      <div className="ml-auto flex items-center">
        <svg viewBox="0 0 30 22" className="h-[22px] w-[30px]" fill="none" stroke="#fff" strokeWidth="1.800" aria-hidden="true">
          <path d="M1 1h24v20H3q-2 0-2-2zM25 5h4v13q0 3-3 3M5 6h16M14 11h7M14 15h7" /><rect x="5" y="10" width="6" height="6" />
        </svg>
        <span className="ml-[10px] w-[142px] pt-[2px] text-[17px] whitespace-nowrap">Rain off and on</span>
        <ChevronUp className="size-[21px]" strokeWidth={1.500} />
        <svg viewBox="0 0 22 22" className="ml-2 size-[22px]" aria-hidden="true">
          <path d="M5 15a4.500 4.500 0 0 1-1-8.500A6 6 0 0 1 15 5q5 1 5 6t-5 5z" fill="#1f86e0" /><circle cx="16" cy="15" r="5.500" fill="#e8f3fc" /><path d="M13 15a3 3 0 0 1 5-2M19 15a3 3 0 0 1-5 2" fill="none" stroke="#1766b0" strokeWidth="1.500" />
        </svg>
        <svg viewBox="0 0 16 20" className="ml-[11px] h-5 w-4" fill="none" stroke="#fff" strokeWidth="1.300" aria-hidden="true"><rect x="1" y="5" width="10" height="10" rx="1" /><path d="M11 9l4-2v7l-4-2M3 2q3-2 6 0M3 18q3 2 6 0" /></svg>
        <svg viewBox="0 0 20 16" className="ml-[11px] h-4 w-5" fill="none" stroke="#fff" strokeWidth="1.300" aria-hidden="true"><path d="M1 1v4h5V1M3.500 5v6h3" /><rect x="6" y="5" width="12" height="9" fill="#fff" /><path d="M19.500 8v3" /></svg>
        <Globe className="ml-[10px] size-[22px]" strokeWidth={1.300} />
        <Volume2 className="ml-[9px] size-[22px]" strokeWidth={1.300} />
        <span className="ml-3 w-[43px] text-sm">TUR</span>
        <div className="w-[70px] text-center text-sm leading-[23px]">2:36 PM<br />6/28/2022</div>
        <button aria-label="Notifications" className="relative ml-[23px] w-[45px]">
          <svg viewBox="0 0 20 20" className="size-5" aria-hidden="true"><path d="M0 0h20v16h-8l-4 4v-4H0z" fill="#fff" /><path d="M3 4h14M3 8h14M3 12h9" stroke="#0b1f2d" strokeWidth="1.300" /></svg>
          <span className="absolute top-[7px] left-[9px] flex size-5 items-center justify-center rounded-full border border-[#5f88ad] bg-[#0c4a80] text-sm">1</span>
        </button>
        <span className="mr-[5px] h-full w-px bg-[#50606c]" />
      </div>
    </footer>
  );
}

export default function App() {
  return (
    <div className="flex min-h-screen flex-col bg-[#f0f0f0] font-['Open_Sans','Noto_Sans',sans-serif] text-black">
      <TitleBar />
      <MenuBar />
      <Toolbars />
      <PageTabs />
      <Canvas />
      <StatusArea />
      <Taskbar />
    </div>
  );
}
